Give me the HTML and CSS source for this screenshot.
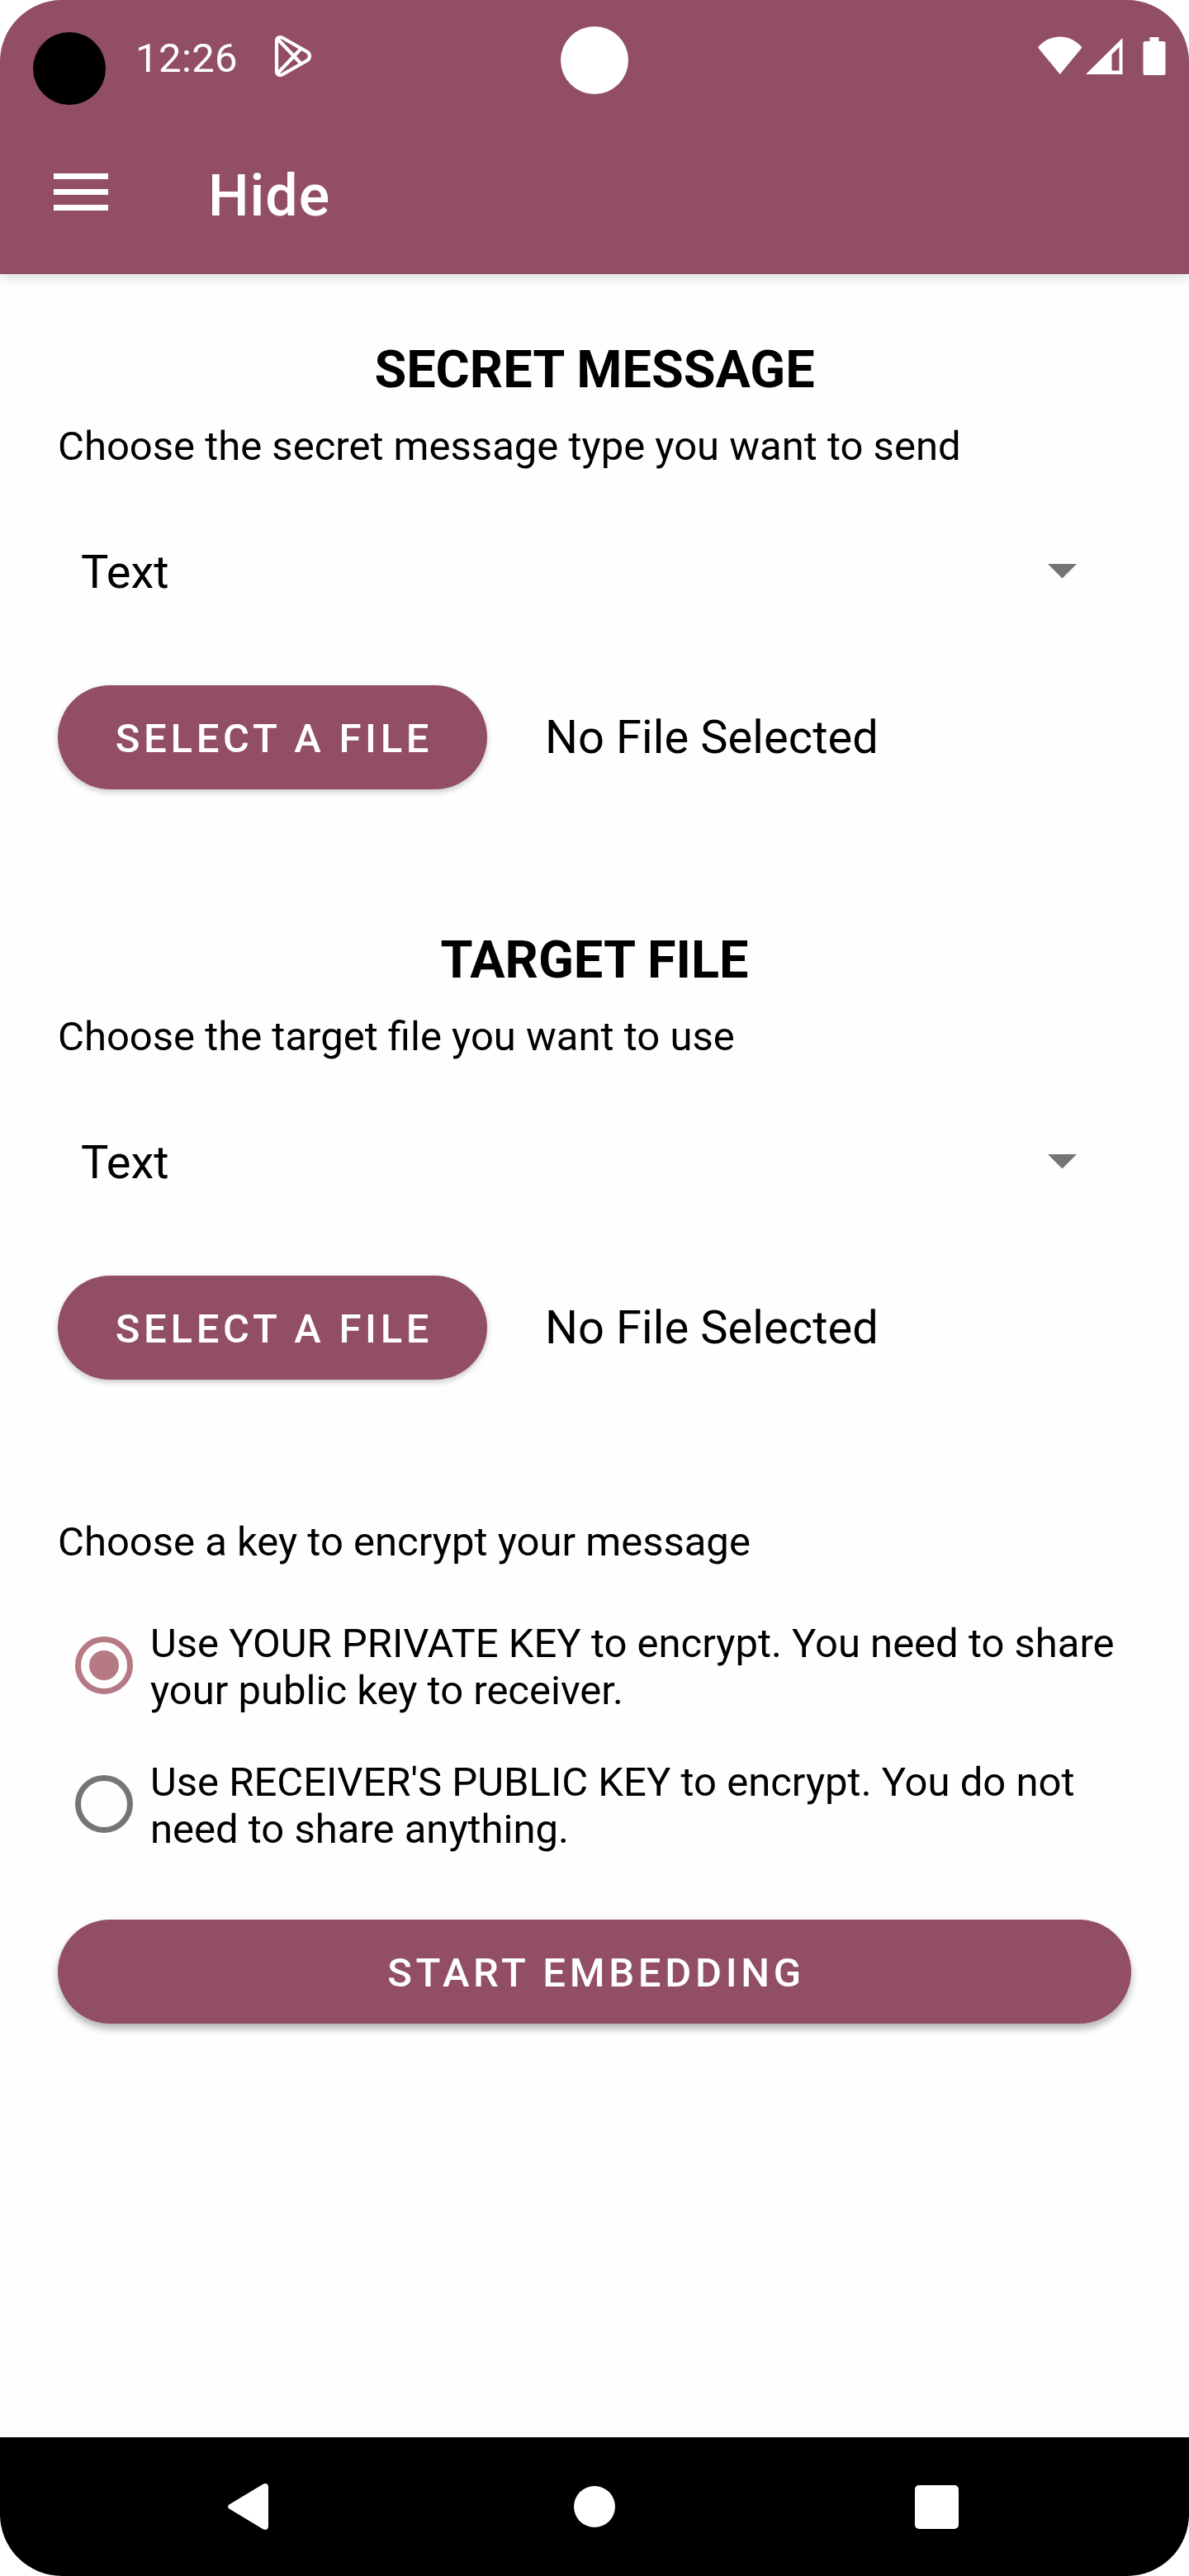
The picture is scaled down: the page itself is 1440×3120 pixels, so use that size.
FILE: index.html
```html
<!DOCTYPE html>
<html lang="en">
<head>
<meta charset="utf-8">
<title>Hide</title>
<link rel="stylesheet" href="styles.css">
</head>
<body>
<div class="screen">
  <header class="header">
    <div class="status">
      <span class="recorder"></span>
      <span class="clock">12:26</span>
      <svg class="play" width="46" height="52" viewBox="0 0 46 52" fill="none" stroke="#fff" stroke-width="4.2" stroke-linejoin="round">
        <path d="M3 7.5C3 3.500 7 2 10.500 4L40 20.800C44 23.200 44 28.800 40 31.200L10.500 48C7 50 3 48.500 3 44.500Z"/>
        <path d="M4.500 5.500L33 35.500M4.500 46.500L33 16.500"/>
      </svg>
      <span class="camera"></span>
      <svg class="signals" width="156" height="48" viewBox="0 0 156 48" fill="#fff">
        <path d="M0 13.500C14-4 39.500-4 53.500 13.500L26.700 46Z"/>
        <path fill-rule="evenodd" d="M102.500 2V46H58ZM98.500 13L89.500 22V41.500H98.500Z"/>
        <path d="M135.500 1H146.500V6H152Q154.500 6 154.500 8.500V44.500Q154.500 47 152 47H130Q127.500 47 127.500 44.500V8.500Q127.500 6 130 6H135.500Z"/>
      </svg>
    </div>
    <div class="toolbar">
      <span class="menu"><i></i><i></i><i></i></span>
      <h1 class="title">Hide</h1>
    </div>
  </header>

  <main class="content">
    <section class="group">
      <h2 class="heading">SECRET MESSAGE</h2>
      <p class="hint">Choose the secret message type you want to send</p>
      <div class="spinner"><span>Text</span><svg width="35" height="18" viewBox="0 0 35 18"><path fill="#757575" d="M0 0H35L17.500 17.500Z"/></svg></div>
      <div class="picker"><button class="button">SELECT A FILE</button><span class="filename">No File Selected</span></div>
    </section>
    <section class="group">
      <h2 class="heading">TARGET FILE</h2>
      <p class="hint">Choose the target file you want to use</p>
      <div class="spinner"><span>Text</span><svg width="35" height="18" viewBox="0 0 35 18"><path fill="#757575" d="M0 0H35L17.500 17.500Z"/></svg></div>
      <div class="picker"><button class="button">SELECT A FILE</button><span class="filename">No File Selected</span></div>
    </section>
    <section class="keys">
      <p class="keys-label">Choose a key to encrypt your message</p>
      <div class="option"><span class="radio radio-on"></span><span>Use YOUR PRIVATE KEY to encrypt. You need to share<br>your public key to receiver.</span></div>
      <div class="option"><span class="radio"></span><span>Use RECEIVER'S PUBLIC KEY to encrypt. You do not<br>need to share anything.</span></div>
    </section>
    <button class="button button-wide">START EMBEDDING</button>
  </main>

  <nav class="navbar">
    <svg width="52" height="60" viewBox="0 0 52 60"><path fill="#fff" d="M2.500 27.500L44 2.400Q49.500 0.500 50 6V54Q49.500 59.500 44 57.600L2.500 32.500Q-0.500 30 2.500 27.500Z"/></svg>
    <span class="home"></span>
    <span class="recent"></span>
  </nav>
</div>
</body>
</html>
```
FILE: styles.css
```css
* { box-sizing: border-box; }
body { margin: 0; background: #fff; }
h1, h2, p { margin: 0; }

.screen {
  display: flex;
  flex-direction: column;
  width: 1440px;
  height: 3120px;
  border-radius: 75px;
  overflow: hidden;
  background: #fefefe;
  color: #000;
  font-family: Roboto, "Noto Sans", sans-serif;
  font-size: 49px;
  line-height: 57px;
}

.header {
  position: relative;
  height: 332px;
  background: #924e62;
  color: #fff;
  box-shadow: 0 4px 14px rgba(0, 0, 0, .14);
}
.status { display: flex; height: 136px; padding-left: 40px; }
.recorder { width: 88px; height: 88px; margin-top: 39px; border-radius: 50%; background: #000; }
.clock { margin: 42px 0 0 36px; width: 168px; letter-spacing: .4px; }
.play { margin-top: 42px; }
.camera {
  position: absolute;
  left: 679px;
  top: 32px;
  width: 82px;
  height: 82px;
  border-radius: 50%;
  background: #fff;
}
.signals { margin: 44px 27px 0 auto; }

.toolbar { display: flex; align-items: center; height: 196px; padding: 0 65px; }
.menu { display: flex; flex-direction: column; gap: 12px; width: 66px; margin: 0 121px 3px 0; }
.menu i { height: 7px; background: #fff; }
.title { font-size: 70px; font-weight: 500; line-height: 82px; margin-top: 6px; letter-spacing: .9px; }

.content { flex: 1; padding: 79px 70px 0; }
.group { height: 715px; }
.heading { font-size: 63px; line-height: 74px; font-weight: 700; text-align: center; }
.hint { margin-top: 27px; }
.spinner {
  display: flex;
  align-items: center;
  justify-content: space-between;
  height: 66px;
  margin-top: 91px;
  padding: 0 66px 0 28px;
  font-size: 56px;
}
.spinner svg { margin-top: -3px; }
.picker { display: flex; align-items: center; gap: 70px; margin-top: 104px; }
.filename { font-size: 56px; line-height: 66px; letter-spacing: .08px; }

.button {
  width: 520px;
  height: 126px;
  padding: 2px 0 0 4px;
  border: 0;
  border-radius: 63px;
  background: #924e62;
  color: #fff;
  font: 500 49px/57px Roboto, "Noto Sans", sans-serif;
  letter-spacing: 4.7px;
  white-space: nowrap;
  box-shadow: 0 3px 7px rgba(0, 0, 0, .22);
}
.button-wide { display: block; width: 100%; box-shadow: 0 6px 10px rgba(0, 0, 0, .3); }

.keys { height: 484px; padding-top: 0; }
.keys-label { margin: -2px 0 66px; }
.keys { display: flow-root; }
.option { display: flex; align-items: center; height: 114px; margin-bottom: 54px; padding-left: 21px; }
.option > span:last-child { white-space: nowrap; }
.radio {
  display: grid;
  place-items: center;
  flex: none;
  width: 70px;
  height: 70px;
  margin: 0 21px 4px 0;
  border: 7px solid #757575;
  border-radius: 50%;
}
.radio-on { border-color: #b57a84; }
.radio-on::after { content: ""; width: 36px; height: 36px; border-radius: 50%; background: #b57a84; }

.navbar {
  display: flex;
  align-items: center;
  height: 168px;
  padding-left: 275px;
  background: #000;
}
.home { width: 50px; height: 50px; margin-left: 368px; border-radius: 50%; background: #fff; }
.recent { width: 53px; height: 53px; margin-left: 363px; border-radius: 5px; background: #fff; }
```
